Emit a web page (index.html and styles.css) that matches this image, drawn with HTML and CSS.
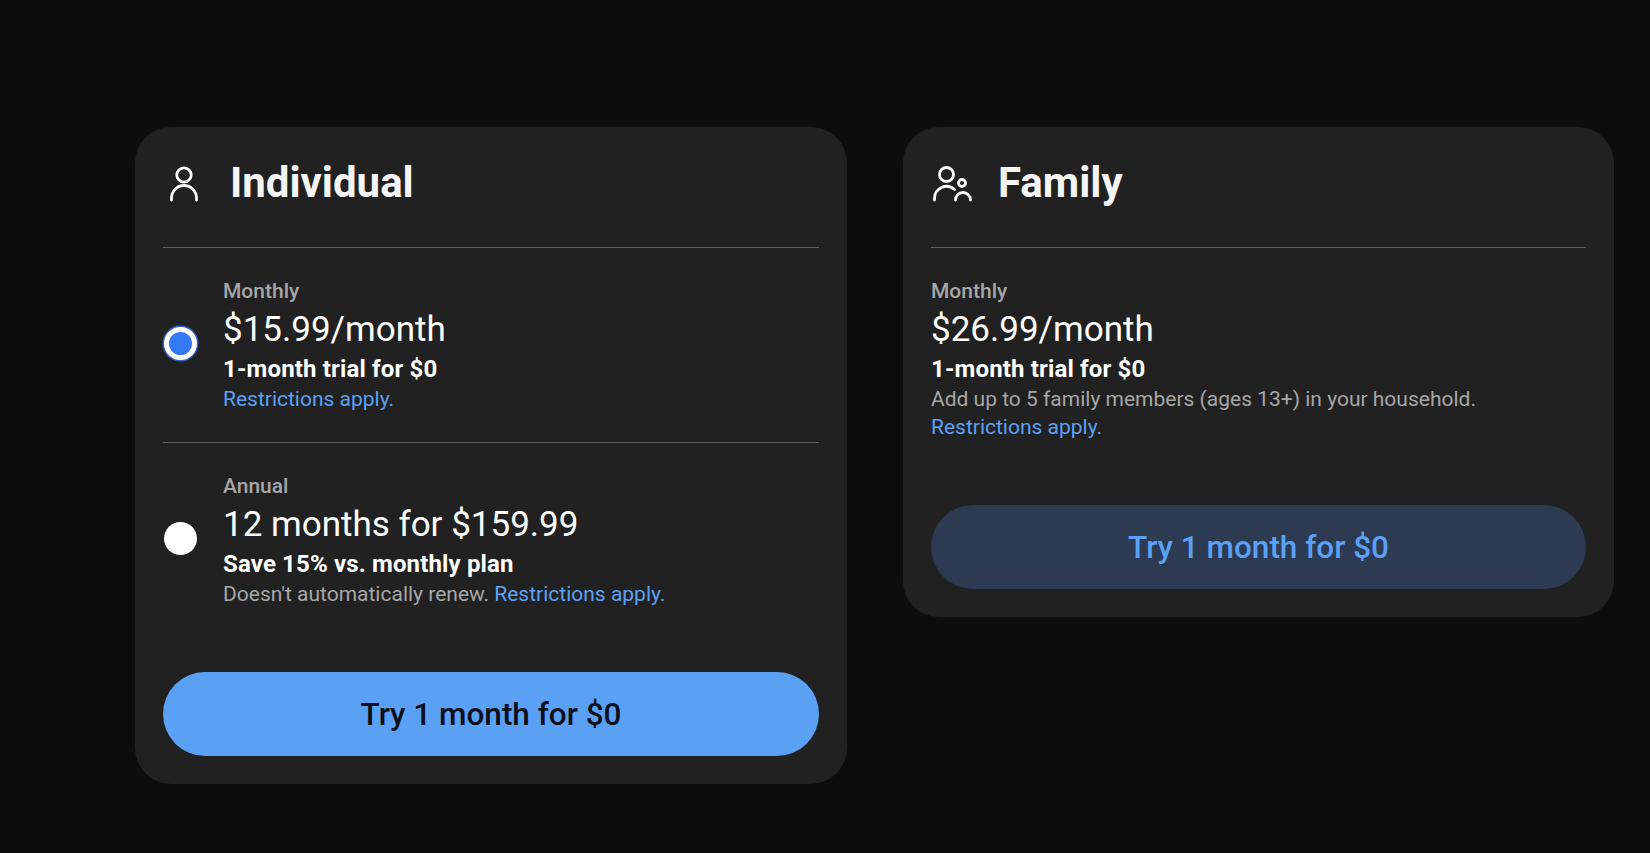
FILE: index.html
```html
<html>
	<head>
		<title>Plans</title>
		<link rel="stylesheet" href="styles.css">
	</head>
	<body>
		<div id='plans'>
			<div class='card'>
				<div class='head'>
					<svg class='icon' width='40' height='40' viewBox='0 0 40 40' fill='none' stroke='#fff' stroke-width='2.800' stroke-linecap='round'>
						<circle cx='20' cy='13' r='7.200'/>
						<path d='M7.500 38v-2a12.500 12.500 0 0 1 25 0v2'/>
					</svg>
					<h1>Individual</h1>
				</div>
				<div class='row first'>
					<div class='radio on'></div>
					<div class='info'>
						<div class='label'>Monthly</div>
						<div class='price'>$15.99/month</div>
						<div class='trial'>1-month trial for $0</div>
						<div class='note'><a>Restrictions apply.</a></div>
					</div>
				</div>
				<div class='row'>
					<div class='radio'></div>
					<div class='info'>
						<div class='label'>Annual</div>
						<div class='price'>12 months for $159.99</div>
						<div class='trial'>Save 15% vs. monthly plan</div>
						<div class='note'>Doesn't automatically renew. <a>Restrictions apply.</a></div>
					</div>
				</div>
				<div class='btn solid'>Try 1 month for $0</div>
			</div>
			<div class='card family'>
				<div class='head'>
					<svg class='icon' width='40' height='40' viewBox='0 0 40 40' fill='none' stroke='#fff' stroke-width='2.800' stroke-linecap='round'>
						<circle cx='14.500' cy='12.500' r='7'/>
						<path d='M2.500 38v-1.500a12 12 0 0 1 20-9'/>
						<circle cx='30' cy='21' r='3.500'/>
						<path d='M23.500 38a7.500 7.500 0 0 1 15 0'/>
					</svg>
					<h1>Family</h1>
				</div>
				<div class='row first plain'>
					<div class='info'>
						<div class='label'>Monthly</div>
						<div class='price'>$26.99/month</div>
						<div class='trial'>1-month trial for $0</div>
						<div class='note'>Add up to 5 family members (ages 13+) in your household.</div>
						<div class='note'><a>Restrictions apply.</a></div>
					</div>
				</div>
				<div class='btn muted'>Try 1 month for $0</div>
			</div>
		</div>
	</body>
</html>
```

FILE: styles.css
```css
html,body{
	margin:0;
	height:100%;
	background:#0d0d0d;
	font-family:Roboto,"Liberation Sans",sans-serif;
	overflow:hidden;
}
#plans{
	display:flex;
	align-items:flex-start;
	gap:56px;
	padding:127px 0 0 135px;
}
.card{
	width:712px;
	box-sizing:border-box;
	padding:0 28px 28px;
	background:#212121;
	border-radius:36px;
}
.card.family{
	width:711px;
}
.head{
	display:flex;
	align-items:center;
	gap:26px;
	height:121px;
	padding:0 0 10px 1px;
	box-sizing:border-box;
	border-bottom:1px solid #5f5f5f;
}
.head .icon{
	flex:none;
}
.head h1{
	margin:0;
	font-size:42px;
	font-weight:700;
	color:#f5f5f5;
}
.row{
	display:flex;
	align-items:center;
	gap:24px;
	padding-top:29px;
	border-top:1px solid #5f5f5f;
}
.row.first{
	border-top:0;
	padding-bottom:29px;
}
.row.plain{
	padding-bottom:0;
}
.radio{
	flex:none;
	width:33px;
	height:33px;
	margin:0 2px 4px 1px;
	box-sizing:border-box;
	border-radius:50%;
	background:#fff;
}
.radio.on{
	background:#3478f6;
	border:5px solid #fff;
	box-shadow:0 0 0 1.500px #2f62c4;
}
.label{
	font-size:21px;
	font-weight:500;
	line-height:28px;
	color:#a6a6a6;
}
.price{
	font-size:35px;
	line-height:50px;
	color:#fff;
}
.trial{
	font-size:24px;
	font-weight:700;
	line-height:29px;
	margin-bottom:1px;
	letter-spacing:.15px;
	color:#fff;
}
.note{
	font-size:21px;
	line-height:28px;
	color:#a6a6a6;
}
.note a{
	color:#5aa1f6;
}
.btn{
	margin-top:64px;
	height:84px;
	line-height:85px;
	border-radius:42px;
	text-align:center;
	font-size:31.500px;
	font-weight:500;
}
.btn.solid{
	background:#5aa1f6;
	color:#0a0f1a;
}
.btn.muted{
	background:#2c3a52;
	color:#5aa1f6;
}
```
